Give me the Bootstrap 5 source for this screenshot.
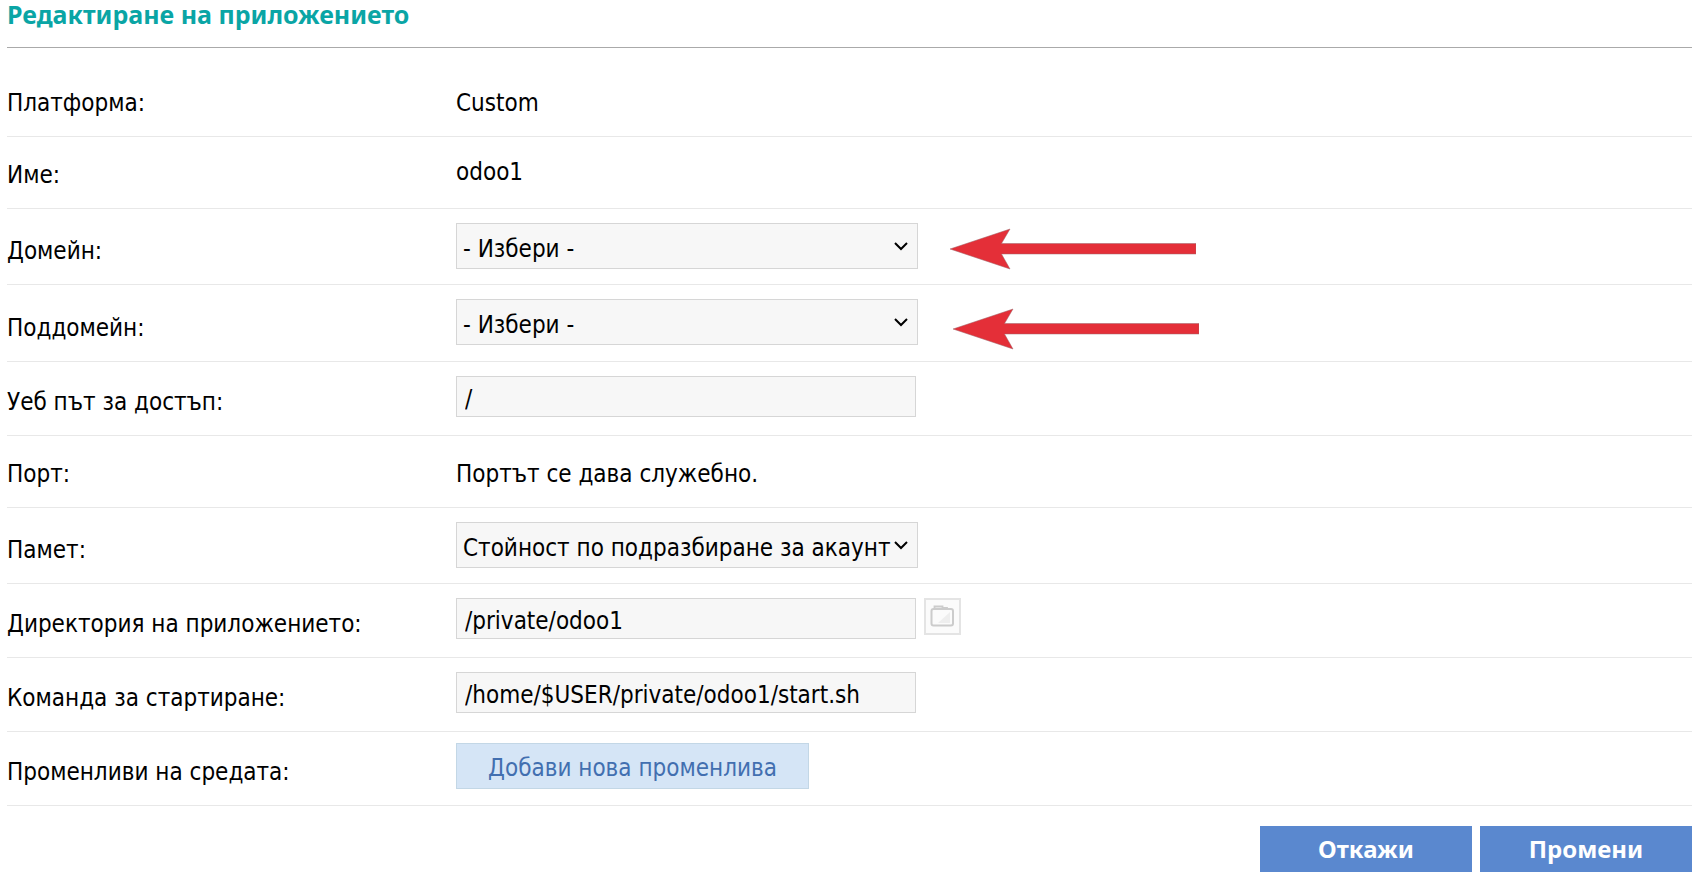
<!DOCTYPE html>
<html lang="bg">
<head>
<meta charset="utf-8">
<meta name="viewport" content="width=device-width, initial-scale=1">
<title>Редактиране на приложението</title>
<link href="https://cdn.jsdelivr.net/npm/bootstrap@5.3.0/dist/css/bootstrap.min.css" rel="stylesheet">
<style>
body { font: 24px/36px "DejaVu Sans Condensed", "Noto Sans", sans-serif; color: #000; background: #fff; }
.page { padding: 0 8px 0 7px; }
.page-title { font: 700 25px/28px "Noto Sans", sans-serif; color: #0aa5a5; border-bottom: 1px solid #aaa; padding-bottom: 19px; margin-bottom: 17px; }
.field { display: grid; grid-template-columns: 449px 1fr; min-height: 72px; border-bottom: 1px solid #e8e8e8; }
.field-select { min-height: 76px; }
.field-input { min-height: 74px; }
.caption { align-self: end; padding-bottom: 15px; }
.value-text { align-self: end; padding-bottom: 15px; }
.value-raised { padding-bottom: 18px; }
.value { padding-top: 14px; }
.value-button { padding-top: 11px; }
.box { font-size: 24px; line-height: 36px; color: #000; background-color: #f7f7f7; border: 1px solid #d6d6d6; border-radius: 0; }
.box:focus { color: #000; background-color: #f7f7f7; }
.form-select.box { width: 462px; height: 46px; padding: 7px 26px 1px 6px; background-size: 14px 10px; background-position: right 9px center;
  background-image: url("data:image/svg+xml,%3csvg xmlns='http://www.w3.org/2000/svg' viewBox='0 0 14 10'%3e%3cpath fill='none' stroke='%23000' stroke-width='2' d='M1 2l6 6 6-6'/%3e%3c/svg%3e"); }
.form-control.box { width: 460px; height: 41px; padding: 4px 8px 0; }
.browse { width: 37px; height: 37px; margin-left: 8px; border: 2px solid #e4e4e4; background: #fbfbfb; }
.arrow { width: 246px; height: 42px; margin: 5px 0 0 32px; }
.arrow-low { margin: 9px 0 11px 35px; }
.btn { font-size: 24px; line-height: 36px; height: 46px; padding: 4px 28px; border-radius: 0; }
.btn-add { width: 353px; padding: 6px 28px 2px; color: #426fb0; background: #d5e5f6; border-color: #c3d7e6; }
.btn-main { width: 212px; font-family: "Noto Sans", sans-serif; font-weight: 700; color: #fff; background: #5a88cf; border: 0; }
</style>
</head>
<body>
<main class="page">
<h1 class="page-title">Редактиране на приложението</h1>
<form>
  <div class="field"><span class="caption">Платформа:</span><span class="value-text">Custom</span></div>
  <div class="field"><span class="caption">Име:</span><span class="value-text value-raised">odoo1</span></div>
  <div class="field field-select">
    <label class="caption" for="domain">Домейн:</label>
    <div class="value d-flex align-items-start">
      <select class="form-select box" id="domain"><option>- Избери -</option></select>
      <svg class="arrow" viewBox="0 0 246 42" aria-hidden="true"><path d="M0 21L60 1 51.500 15.500H246v10.500H51.500L60 41z" fill="#e42f38" stroke="#9c6468" stroke-width=".5"/></svg>
    </div>
  </div>
  <div class="field field-select">
    <label class="caption" for="subdomain">Поддомейн:</label>
    <div class="value d-flex align-items-start">
      <select class="form-select box" id="subdomain"><option>- Избери -</option></select>
      <svg class="arrow arrow-low" viewBox="0 0 246 42" aria-hidden="true"><path d="M0 21L60 1 51.500 15.500H246v10.500H51.500L60 41z" fill="#e42f38" stroke="#9c6468" stroke-width=".5"/></svg>
    </div>
  </div>
  <div class="field field-input">
    <label class="caption" for="path">Уеб път за достъп:</label>
    <div class="value"><input class="form-control box" type="text" id="path" value="/"></div>
  </div>
  <div class="field"><span class="caption">Порт:</span><span class="value-text">Портът се дава служебно.</span></div>
  <div class="field field-select">
    <label class="caption" for="memory">Памет:</label>
    <div class="value"><select class="form-select box" id="memory"><option>Стойност по подразбиране за акаунт</option></select></div>
  </div>
  <div class="field field-input">
    <label class="caption" for="dir">Директория на приложението:</label>
    <div class="value d-flex align-items-start">
      <input class="form-control box" type="text" id="dir" value="/private/odoo1">
      <button class="browse p-0 d-flex align-items-start justify-content-center" type="button" aria-label="Избор на директория">
        <svg width="25" height="29" viewBox="0 0 25 29" aria-hidden="true"><path d="M8 23L20 12v11z" fill="#eee"/><path d="M4.500 9V6.500h8V8H17v1" fill="none" stroke="#ccc" stroke-width="1.800"/><rect x="1.500" y="9" width="21.500" height="16.500" rx="2" fill="none" stroke="#ccc" stroke-width="2"/></svg>
      </button>
    </div>
  </div>
  <div class="field field-input">
    <label class="caption" for="command">Команда за стартиране:</label>
    <div class="value"><input class="form-control box" type="text" id="command" value="/home/$USER/private/odoo1/start.sh"></div>
  </div>
  <div class="field field-input">
    <span class="caption">Променливи на средата:</span>
    <div class="value-button"><button class="btn btn-add" type="button">Добави нова променлива</button></div>
  </div>
  <div class="d-flex justify-content-end gap-2 mt-3 pt-1">
    <button class="btn btn-main" type="button">Откажи</button>
    <button class="btn btn-main" type="submit">Промени</button>
  </div>
</form>
</main>
<script src="https://cdn.jsdelivr.net/npm/bootstrap@5.3.0/dist/js/bootstrap.bundle.min.js"></script>
</body>
</html>
